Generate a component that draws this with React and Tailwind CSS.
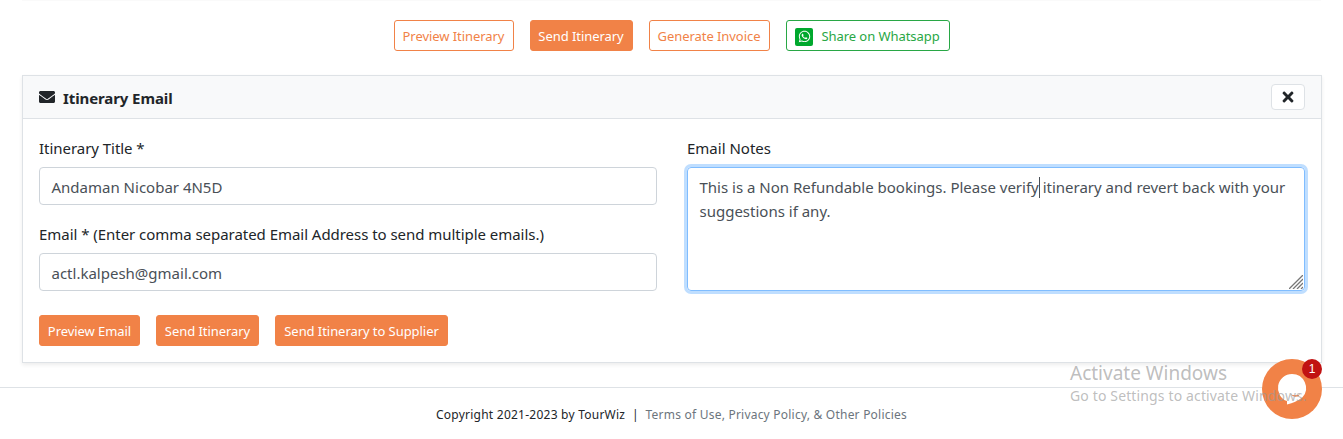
import { FaEnvelope, FaTimes, FaWhatsapp } from "react-icons/fa";

const base =
  "flex h-[31px] items-center justify-center whitespace-nowrap rounded-[3px] border pt-[2px] text-[13px] leading-[21px] tracking-[-0.06px]";
const solid = "border-[#f18247] bg-[#f18247] text-white";
const outline = "border-[#f18247] text-[#f18247]";

function Toolbar() {
  return (
    <div className="flex justify-center gap-4 pt-5">
      <button className={`${base} ${outline} w-[120px]`}>Preview Itinerary</button>
      <button className={`${base} ${solid} w-[103px]`}>Send Itinerary</button>
      <button className={`${base} ${outline} w-[121px]`}>Generate Invoice</button>
      <button className={`${base} w-[164px] gap-2 border-[#28a745] text-[#28a745]`}>
        <span className="flex h-[18px] w-[18px] items-center justify-center rounded-[2px] bg-[#00a82d]">
          <FaWhatsapp className="h-[13px] w-[13px] text-white" />
        </span>
        Share on Whatsapp
      </button>
    </div>
  );
}

function Field({ label, value }) {
  return (
    <div>
      <div className="mb-[7px] h-6 whitespace-nowrap text-[15px] leading-6 tracking-[-0.04px] text-[#212529]">{label}</div>
      <div className="flex h-[38px] items-center whitespace-nowrap rounded border border-[#ced4da] px-[11.5px] pt-[2px] text-[15px] leading-6 text-[#495057]">
        {value}
      </div>
    </div>
  );
}

function ResizeGrip() {
  return (
    <svg className="absolute right-[1px] bottom-[1px] h-[14px] w-[14px]" viewBox="0 0 14 14" fill="none" stroke="#777" strokeWidth="1.3">
      <path d="M0 14L14 0M4 14L14 4M8 14L14 8M12 14L14 12" />
    </svg>
  );
}

function ChatBubble() {
  return (
    <div className="absolute top-[359px] left-[1262px] h-[60px] w-[60px]">
      <svg viewBox="0 0 60 60" className="h-full w-full">
        <circle cx="30" cy="30" r="30" fill="#f18247" />
        <path d="M30 15a14 14 0 0 1 10.500 23.300Q34 43.500 25 45.500V42.100A14 14 0 0 1 30 15Z" fill="#fff" />
        <path d="M28.500 35.200Q33 37.200 38.300 35.200Q34 40.300 28.500 35.200Z" fill="#f18247" />
      </svg>
      <span className="absolute top-0 right-0 flex h-5 w-5 items-center justify-center rounded-full bg-[#c11212] font-['Liberation_Sans',sans-serif] text-[12px] text-white">
        1
      </span>
    </div>
  );
}

export default function App() {
  return (
    <div className="relative h-[439px] w-[1343px] overflow-hidden bg-white font-['Noto_Sans',sans-serif]">
      <div className="mx-[22px] h-px bg-[#fafafa]" />
      <div className="-mt-px">
        <Toolbar />
      </div>
      <section className="mx-[22px] mt-6 h-[288px] w-[1300px] border border-[#dee2e6] bg-white shadow-[0_2px_4px_rgba(0,0,0,0.075)]">
        <header className="flex h-[43px] items-center justify-between border-b border-[#dee2e6] bg-[#f8f9fa] px-4">
          <h2 className="flex items-center gap-2 text-[15px] leading-6 font-bold tracking-[-0.1px] text-[#212529]">
            <FaEnvelope className="h-4 w-4" />
            <span className="pt-[2px]">Itinerary Email</span>
          </h2>
          <button className="flex h-[26px] w-[34px] items-center justify-center rounded border border-[#dee2e6] bg-white text-[#212529]">
            <FaTimes className="h-4 w-4" />
          </button>
        </header>
        <div className="grid grid-cols-[618px_618px] gap-[30px] pt-[17px] pl-4">
          <div>
            <Field label="Itinerary Title *" value="Andaman Nicobar 4N5D" />
            <div className="mt-[17px]">
              <Field label="Email * (Enter comma separated Email Address to send multiple emails.)" value="actl.kalpesh@gmail.com" />
            </div>
            <div className="mt-6 flex gap-4">
              <button className={`${base} ${solid} w-[101px]`}>Preview Email</button>
              <button className={`${base} ${solid} w-[103px]`}>Send Itinerary</button>
              <button className={`${base} ${solid} w-[173px]`}>Send Itinerary to Supplier</button>
            </div>
          </div>
          <div>
            <div className="mb-[7px] h-6 text-[15px] leading-6 text-[#212529]">Email Notes</div>
            <div className="relative h-[124px] rounded border border-[#80bdff] px-[11.5px] pt-[7px] text-[15px] leading-6 whitespace-nowrap text-[#495057] shadow-[0_0_0_3px_#bfdeff]">
              This is a Non Refundable bookings. Please verify
              <span className="absolute top-[9px] left-[351px] h-[21px] w-px bg-[#495057]" /> itinerary and revert back with your
              <br />
              suggestions if any.
              <ResizeGrip />
            </div>
          </div>
        </div>
      </section>
      <footer className="mt-6 flex justify-center border-t border-[#dee2e6] pt-4 text-[12px] leading-[21px] whitespace-pre">
        <span className="tracking-[0.24px] text-[#212529]">Copyright 2021-2023 by TourWiz  |  </span>
        <span className="tracking-[0.22px] text-[#6c757d]">Terms of Use, Privacy Policy, &amp; Other Policies</span>
      </footer>
      <ChatBubble />
      <div className="absolute top-[360px] left-[1070px] whitespace-nowrap text-[#999]/65">
        <div className="text-[19px] leading-[26px]">Activate Windows</div>
        <div className="text-[14px] leading-[20px] tracking-[0.14px]">Go to Settings to activate Windows.</div>
      </div>
    </div>
  );
}
